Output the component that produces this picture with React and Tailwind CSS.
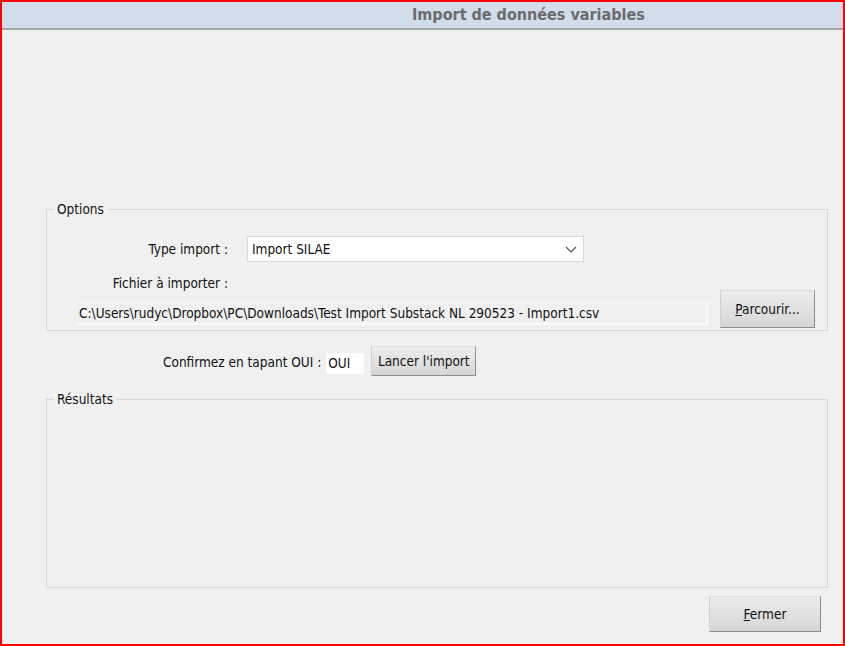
import React from "react";

const ui = { fontFamily: '"DejaVu Sans Condensed", "DejaVu Sans", sans-serif' };

function WinButton({ children, className = "" }) {
  return (
    <button
      className={
        "flex items-center justify-center bg-linear-to-b from-[#ececec] to-[#d6d6d6] border border-t-[#dcdcdc] border-l-[#d0d0d0] border-r-[#8e8e8e] border-b-[#8e8e8e] text-[13.5px] text-[#111] " +
        className
      }
      style={ui}
    >
      {children}
    </button>
  );
}

export default function App() {
  return (
    <div
      className="w-[845px] h-[646px] box-border border-2 border-[#ff0000] bg-[#f0f0f0] flex flex-col overflow-hidden"
      style={ui}
    >
      {/* Header */}
      <div className="h-[28px] shrink-0 bg-[#d1ddeb] border-b-2 border-[#a3a3a3] flex items-center pl-[410px]">
        <span className="text-[16px] font-bold text-[#6b6b6b] leading-none">
          Import de données variables
        </span>
      </div>

      {/* Options */}
      <fieldset className="mt-[172px] ml-[44px] mr-[15px] border border-[#d8d8d8] p-0 pb-[2px] min-w-0">
        <legend className="ml-[7px] px-[3px] text-[13.5px] leading-[14px] text-[#111]">Options</legend>
        <div className="flex items-center mt-[20px] h-[26px]">
          <div className="w-[181px] text-right text-[13.5px] text-[#111]">Type import :</div>
          <div className="ml-[19px] w-[337px] h-[26px] bg-white border border-[#d9d9d9] flex items-center justify-between pl-[4px] pr-[6px]">
            <span className="text-[13.5px] text-[#111]">Import SILAE</span>
            <svg width="12" height="7" viewBox="0 0 12 7" fill="none">
              <path d="M1 1 L6 6 L11 1" stroke="#555" strokeWidth="1.1" />
            </svg>
          </div>
        </div>
        <div className="flex items-center mt-[14px] h-[14px]">
          <div className="w-[181px] text-right text-[13.5px] text-[#111]">Fichier à importer :</div>
        </div>
        <div className="flex items-end h-[38px]">
          <div className="ml-[30px] w-[631px] h-[23px] mb-[3px] border-r-2 border-b-2 border-t border-t-[#f6f6f6] border-r-[#fbfbfb] border-b-[#fbfbfb] flex items-center pl-[2px] overflow-hidden">
            <span className="text-[13.5px] text-[#111] whitespace-nowrap">
              C:\Users\rudyc\Dropbox\PC\Downloads\Test Import Substack NL 290523 - Import1.csv
            </span>
          </div>
          <WinButton className="ml-[12px] w-[95px] h-[38px]">
            <span>
              <span className="underline">P</span>arcourir...
            </span>
          </WinButton>
        </div>
      </fieldset>

      {/* Confirm row */}
      <div className="flex items-center mt-[15px] h-[30px] pl-[161px]">
        <span className="text-[13.5px] text-[#111] mt-[3px] whitespace-nowrap">Confirmez en tapant OUI :</span>
        <div className="ml-[5px] w-[38px] h-[21px] bg-white flex items-center pl-[2px] mt-[5px]">
          <span className="text-[13.5px] text-[#111]">OUI</span>
        </div>
        <WinButton className="ml-[7px] w-[105px] h-[30px]">Lancer l'import</WinButton>
      </div>

      {/* Résultats */}
      <fieldset className="mt-[16px] ml-[44px] mr-[15px] h-[196px] border border-[#d8d8d8] p-0 min-w-0">
        <legend className="ml-[7px] px-[3px] text-[13.5px] leading-[14px] text-[#111]">Résultats</legend>
      </fieldset>

      {/* Fermer */}
      <div className="flex justify-end mt-[8px] pr-[22px]">
        <WinButton className="w-[112px] h-[36px]">
          <span>
            <span className="underline">F</span>ermer
          </span>
        </WinButton>
      </div>
    </div>
  );
}
